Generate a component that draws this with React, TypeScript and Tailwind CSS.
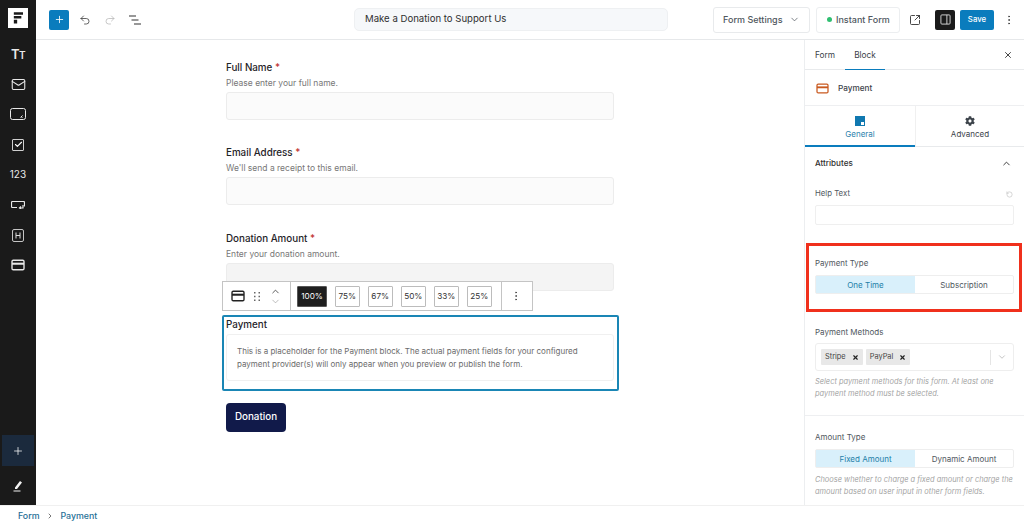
import React from 'react';
import { ChevronDown, ChevronUp, Check, Mail, MoreVertical, Plus, Redo2, Undo2, X, RotateCcw, ChevronRight, SquareArrowOutUpRight } from 'lucide-react';
import { FaCog } from 'react-icons/fa';

const font = { fontFamily: 'Inter, "Liberation Sans", sans-serif' };

const CardIcon = ({ className = '' }: { className?: string }) => (
    <svg viewBox="0 0 16 14" className={className} fill="none" stroke="currentColor" strokeWidth="1.6">
        <rect x="1" y="1.5" width="14" height="11" rx="1.5" />
        <path d="M1 5.5h14" strokeWidth="2.4" />
    </svg>
);

const SideIcon = ({ children }: { children: React.ReactNode }) => (
    <div className="h-[30.2px] flex items-center justify-center text-[#e8e8e8]">{children}</div>
);

const Sidebar = () => (
    <div className="w-[36px] h-full bg-[#1a1a1a] flex flex-col items-center shrink-0">
        <div className="mt-[8px] w-[20px] h-[20px] bg-white flex items-center justify-center">
            <svg viewBox="0 0 12 14" className="w-[10px] h-[12px]" fill="#1a1a1a">
                <path d="M1 0h11v3H1zM1 4.5h9v3H1zM1 9h4v4.500H1z" />
            </svg>
        </div>
        <div className="mt-[11px] flex flex-col w-full">
            <SideIcon>
                <span className="font-semibold text-[13px] leading-none tracking-[-0.5px]">T<span className="text-[10px]">T</span></span>
            </SideIcon>
            <SideIcon><Mail size={15} strokeWidth={1.7} /></SideIcon>
            <SideIcon>
                <svg viewBox="0 0 16 12" className="w-[16px] h-[12px]" fill="none" stroke="currentColor" strokeWidth="1">
                    <rect x="0.5" y="0.5" width="15" height="11" rx="2" />
                    <path d="M12.500 7.500l-2 2M12.500 9.500h-1" />
                </svg>
            </SideIcon>
            <SideIcon>
                <div className="w-[12px] h-[12px] border border-[#cfcfcf] rounded-[1px] flex items-center justify-center">
                    <Check size={9} strokeWidth={3} className="text-white" />
                </div>
            </SideIcon>
            <SideIcon><span className="text-[10px] tracking-[0.1px]">123</span></SideIcon>
            <SideIcon>
                <svg viewBox="0 0 14 8" className="w-[14px] h-[8px]" fill="none" stroke="currentColor" strokeWidth="1.2">
                    <path d="M6 6.500H1.500a1 1 0 0 1-1-1V1.500a1 1 0 0 1 1-1h11a1 1 0 0 1 1 1v4" />
                    <path d="M12 4v3H8.500M10 5.500L8.500 7 10 8" />
                </svg>
            </SideIcon>
            <SideIcon>
                <svg viewBox="0 0 12 13" className="w-[12px] h-[13px]" fill="none" stroke="#c4c4c4" strokeWidth="1">
                    <rect x="0.500" y="0.500" width="11" height="12" rx="1.500" />
                    <path d="M4 3.500v6M8 3.500v6M4 6.500h4" stroke="#dddddd" />
                </svg>
            </SideIcon>
            <SideIcon><CardIcon className="w-[14px] h-[12px]" /></SideIcon>
        </div>
        <div className="mt-auto w-[32px] h-[31px] bg-[#1b2a3d] flex items-center justify-center text-white">
            <Plus size={12} strokeWidth={1.5} />
        </div>
        <div className="mt-[12px] mb-[11px] h-[16px] flex items-center justify-center">
            <svg viewBox="0 0 10 12" className="w-[10px] h-[12px]" fill="#f2f2f2">
                <path d="M2 7.500L7 1l2 1.500L4 9H2zM0.500 10.500h7v1h-7z" />
            </svg>
        </div>
    </div>
);

const Header = () => (
    <div className="h-[40px] border-b border-[#e6e8ea] flex items-center shrink-0 bg-white">
        <div className="ml-[13px] w-[20px] h-[20px] bg-[#0a7cbd] rounded-[2px] flex items-center justify-center text-white">
            <Plus size={11} strokeWidth={1.8} />
        </div>
        <Undo2 size={12} strokeWidth={1.5} className="ml-[10px] text-[#333]" />
        <Redo2 size={12} strokeWidth={1.5} className="ml-[13px] text-[#b5b5b5]" />
        <svg viewBox="0 0 12 10" className="ml-[13px] w-[12px] h-[10px]" fill="none" stroke="#333" strokeWidth="1.100">
            <path d="M0 1h7M2.500 5h7M5 9h7" />
        </svg>
        <div className="ml-[213px] w-[314px] h-[23px] rounded-[5px] bg-[#f6f8fa] border border-[#eef0f2] pl-[10px] flex items-center text-[9.600px] text-[#2f2f2f]">
            Make a Donation to Support Us
        </div>
        <div className="ml-[45px] w-[97px] h-[26px] rounded-[3px] border border-[#e8eaec] flex items-center pl-[9px] text-[9px] font-medium text-[#50575e]">
            Form Settings
            <ChevronDown size={11} strokeWidth={1.6} className="ml-[7px]" />
        </div>
        <div className="ml-[6px] w-[84px] h-[26px] rounded-[3px] border border-[#eceef0] flex items-center pl-[10px] text-[9px] font-medium text-[#50575e]">
            <span className="w-[5px] h-[5px] rounded-full bg-[#2fbf71] mr-[4px]" />
            Instant Form
        </div>
        <SquareArrowOutUpRight size={12} strokeWidth={1.8} className="ml-[9px] text-[#333]" />
        <div className="ml-[14px] w-[20px] h-[20px] bg-[#1a1a1a] rounded-[2px] flex items-center justify-center">
            <svg viewBox="0 0 12 12" className="w-[11px] h-[11px]" fill="none" stroke="#ddd" strokeWidth="1">
                <rect x="1" y="1" width="10" height="10" rx="1" />
                <path d="M7.500 1v10" />
            </svg>
        </div>
        <div className="ml-[5px] w-[34px] h-[20px] bg-[#0a7cbd] rounded-[2px] flex items-center justify-center text-white text-[7.800px] font-medium">Save</div>
        <MoreVertical size={12} strokeWidth={1.8} className="ml-[9px] text-[#444]" />
    </div>
);

const Field = ({ label, help, grey = false, gap }: { label: string; help: string; grey?: boolean; gap: string }) => (
    <div className={`w-[388px] ${gap}`}>
        <div className="h-[15px] leading-[15px] text-[9.800px] font-medium text-[#1f2328]">
            {label} <span className="text-[#c02b2b]">*</span>
        </div>
        <div className="mt-[2px] h-[12px] leading-[12px] text-[8.500px] text-[#777]">{help}</div>
        <div className={`mt-[3px] h-[28px] rounded-[3px] border border-[#ececec] ${grey ? 'bg-[#f4f4f4]' : 'bg-[#fbfbfb]'}`} />
    </div>
);

const PercentBtn = ({ label, active = false }: { label: string; active?: boolean }) => (
    <div className={`h-[21px] flex items-center justify-center text-[8.200px] border rounded-[1px] ${active ? 'w-[30px] bg-[#1e1e1e] border-[#555] text-white' : 'w-[25.500px] ml-[7.500px] border-[#bcbcbc] text-[#333]'}`}>
        {label}
    </div>
);

const BlockToolbar = () => (
    <div className="absolute left-[186px] top-[241px] w-[311px] h-[30px] bg-white border border-[#c4c4c4] flex items-center">
        <div className="w-[68px] h-full border-r border-[#c4c4c4] flex items-center text-[#222]">
            <CardIcon className="ml-[8px] w-[14px] h-[12px]" />
            <svg viewBox="0 0 6 9" className="ml-[9px] w-[6px] h-[9px]" fill="#666">
                <path d="M0 0h1.500v1.500H0zM4.500 0H6v1.500H4.500zM0 3.700h1.500v1.500H0zM4.500 3.700H6v1.500H4.500zM0 7.500h1.500V9H0zM4.500 7.500H6V9H4.500z" />
            </svg>
            <div className="ml-[10px] flex flex-col items-center">
                <ChevronUp size={11} strokeWidth={1.6} className="-mb-[1px]" />
                <ChevronDown size={11} strokeWidth={1.2} className="text-[#888]" />
            </div>
        </div>
        <div className="w-[211px] h-full border-r border-[#c4c4c4] pl-[6px] flex items-center">
            <PercentBtn label="100%" active />
            <PercentBtn label="75%" />
            <PercentBtn label="67%" />
            <PercentBtn label="50%" />
            <PercentBtn label="33%" />
            <PercentBtn label="25%" />
        </div>
        <MoreVertical size={12} strokeWidth={1.6} className="ml-[8px] text-[#444]" />
    </div>
);

const Canvas = () => (
    <div className="relative flex-1 flex flex-col items-center bg-white">
        <Field label="Full Name" help="Please enter your full name." gap="mt-[20px]" />
        <Field label="Email Address" help="We'll send a receipt to this email." gap="mt-[25px]" />
        <Field label="Donation Amount" help="Enter your donation amount." grey gap="mt-[26px]" />
        <div className="mt-[24px] w-[397px] h-[76px] border-2 border-[#1a86b5] rounded-[2px] px-[2.500px]">
            <div className="h-[17px] leading-[15px] text-[9.800px] font-medium text-[#1f2328]">Payment</div>
            <div className="h-[47px] border border-[#f0f0f0] rounded-[3px] pt-[10px] pl-[10px] text-[8px] leading-[12.500px] text-[#6b6b6b]">
                <div>This is a placeholder for the Payment block. The actual payment fields for your configured</div>
                <div>payment provider(s) will only appear when you preview or publish the form.</div>
            </div>
        </div>
        <div className="mt-[12px] w-[388px]">
            <div className="w-[60px] h-[29px] bg-[#111a4a] rounded-[4px] flex items-center justify-center text-white text-[9.800px] font-medium">Donation</div>
        </div>
        <BlockToolbar />
    </div>
);

const Segmented = ({ left, right }: { left: string; right: string }) => (
    <div className="mt-[6px] w-[199px] h-[19px] flex border border-[#eeeeee] rounded-[2px] text-[8px]">
        <div className="w-[99px] bg-[#d9f0fb] text-[#1e7fa8] flex items-center justify-center">{left}</div>
        <div className="flex-1 text-[#50575e] flex items-center justify-center">{right}</div>
    </div>
);

const Tag = ({ label }: { label: string }) => (
    <div className="h-[16px] bg-[#e8e8e8] flex items-center px-[4px] text-[7.400px] text-[#444] mr-[3px] rounded-[1px]">
        {label}
        <X size={7} strokeWidth={4} className="ml-[6px] text-[#222]" />
    </div>
);

const Panel = () => (
    <div className="w-[220px] shrink-0 border-l border-[#eceef0] bg-white flex flex-col relative">
        <div className="h-[30px] flex border-b border-[#e8eaec] text-[8.300px] text-[#3c434a] relative">
            <div className="w-[40px] flex items-center justify-center pt-[2px]">Form</div>
            <div className="w-[40px] flex items-center justify-center border-b-[1.500px] border-[#0a7cbd] h-[30px] pt-[2px]">Block</div>
            <X size={10} strokeWidth={2} className="absolute right-[11px] top-[10px] text-[#222]" />
        </div>
        <div className="h-[36px] flex items-center border-b border-[#eeeff1] pl-[11px] pt-[1px]">
            <CardIcon className="w-[13px] h-[11px] text-[#c9591f]" />
            <span className="ml-[9px] text-[8.200px] font-medium text-[#3c434a]">Payment</span>
        </div>
        <div className="h-[41px] flex border-b border-[#e8eaec] text-[8px]">
            <div className="w-[110px] flex flex-col items-center pt-[10px] border-b-2 border-[#0a7cbd] h-[41px] text-[#2c82ad]">
                <svg viewBox="0 0 10 10" className="w-[10px] h-[10px]" fill="#1078b0">
                    <path d="M0 0h10v10H0z" />
                    <path d="M6 6h3v3H6z" fill="#fff" />
                </svg>
                <span className="mt-[2px]">General</span>
            </div>
            <div className="flex-1 flex flex-col items-center pt-[10px] border-l border-[#f0f0f0] text-[#3c434a]">
                <FaCog size={10} />
                <span className="mt-[2px]">Advanced</span>
            </div>
        </div>
        <div className="px-[10px]">
            <div className="h-[32px] flex items-center justify-between text-[8.100px] font-medium text-[#2f2f2f]">
                Attributes
                <ChevronUp size={11} strokeWidth={2} className="mr-[2px]" />
            </div>
            <div className="mt-[9px] flex items-center justify-between h-[12px] text-[7.800px] text-[#50575e]">
                Help Text
                <RotateCcw size={7} className="text-[#bbb] mr-[1px]" />
            </div>
            <div className="mt-[5px] w-[199px] h-[20px] border border-[#efefef] rounded-[2px]" />
            <div className="mt-[32px] h-[12px] leading-[12px] text-[7.900px] text-[#50575e]">Payment Type</div>
            <Segmented left="One Time" right="Subscription" />
            <div className="mt-[32px] h-[12px] leading-[12px] text-[8px] text-[#50575e]">Payment Methods</div>
            <div className="mt-[5px] w-[199px] h-[28px] border border-[#eeeeee] rounded-[3px] flex items-center pl-[5px] relative">
                <Tag label="Stripe" />
                <Tag label="PayPal" />
                <div className="absolute right-[22px] top-[6px] h-[15px] w-px bg-[#e5e5e5]" />
                <ChevronDown size={10} className="absolute right-[6px] top-[8px] text-[#bbb]" />
            </div>
            <div className="mt-[5px] text-[7.450px] leading-[11.500px] italic text-[#a5a5a5] whitespace-nowrap">
                <div>Select payment methods for this form. At least one</div>
                <div>payment method must be selected.</div>
            </div>
        </div>
        <div className="mt-[16px] border-t border-[#eeeff1] px-[10px]">
            <div className="mt-[15px] h-[12px] leading-[12px] text-[8px] text-[#50575e]">Amount Type</div>
            <Segmented left="Fixed Amount" right="Dynamic Amount" />
            <div className="mt-[6px] text-[7.450px] leading-[11.500px] italic text-[#a5a5a5] whitespace-nowrap">
                <div>Choose whether to charge a fixed amount or charge the</div>
                <div>amount based on user input in other form fields.</div>
            </div>
        </div>
        {/* annotation box from the article screenshot */}
        <div className="absolute left-[1px] top-[203px] w-[216px] h-[69px] border-[3px] border-[#f0301c]" />
    </div>
);

export default function App() {
    return (
        <div className="w-[1024px] h-[522px] flex flex-col overflow-hidden bg-white" style={font}>
            <div className="h-[505px] flex">
                <Sidebar />
                <div className="flex-1 flex flex-col min-w-0">
                    <Header />
                    <div className="flex-1 flex min-h-0">
                        <Canvas />
                        <Panel />
                    </div>
                </div>
            </div>
            <div className="h-[17px] border-t border-[#f0f0f0] flex items-center pt-[4px] pl-[18px] text-[8.800px] font-medium text-[#1f6f96]">
                Form
                <ChevronRight size={8} strokeWidth={2} className="mx-[6.500px] text-[#333]" />
                Payment
            </div>
        </div>
    );
}
